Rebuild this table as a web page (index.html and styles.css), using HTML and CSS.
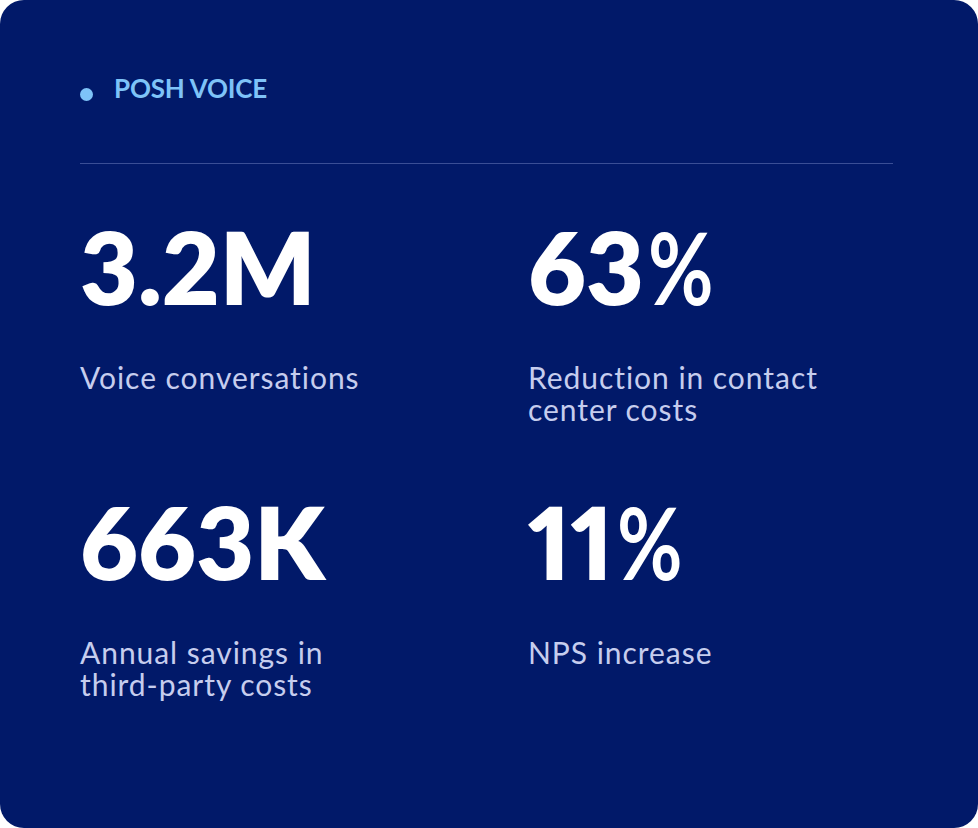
FILE: index.html
```html
<!DOCTYPE html>
<html lang="en">
<head>
<meta charset="utf-8">
<title>Posh Voice</title>
<link rel="stylesheet" href="styles.css">
</head>
<body>
<section class="card">
  <header class="label">
    <span class="dot"></span>
    <span class="label-text">POSH VOICE</span>
  </header>
  <hr class="divider">
  <div class="stats">
    <div class="stat">
      <div class="value">3.2M</div>
      <div class="caption">Voice conversations</div>
    </div>
    <div class="stat">
      <div class="value">63<span class="pct">%</span></div>
      <div class="caption">Reduction in contact<br>center costs</div>
    </div>
    <div class="stat">
      <div class="value">663K</div>
      <div class="caption">Annual savings in<br>third-party costs</div>
    </div>
    <div class="stat">
      <div class="value">11<span class="pct">%</span></div>
      <div class="caption">NPS increase</div>
    </div>
  </div>
</section>
</body>
</html>
```
FILE: styles.css
```css
html, body {
  margin: 0;
  padding: 0;
  background: #ffffff;
}

body {
  font-family: "Lato", "Liberation Sans", sans-serif;
}

.card {
  box-sizing: border-box;
  width: 978px;
  height: 828px;
  background: #011969;
  border-radius: 24px;
  padding: 73px 85px 0 80px;
}

.label {
  display: flex;
  align-items: center;
  gap: 21px;
  height: 31px;
}

.dot {
  width: 13px;
  height: 13px;
  border-radius: 50%;
  background: #7ec3f8;
  margin-top: 11px;
  flex: none;
}

.label-text {
  color: #7ec3f8;
  font-size: 26px;
  font-weight: 700;
  line-height: 31px;
  letter-spacing: -0.2px;
}

.divider {
  border: 0;
  height: 1px;
  background: #3a4e96;
  margin: 59px 0 0 0;
}

.stats {
  display: grid;
  grid-template-columns: 448px 1fr;
  row-gap: 66px;
  margin-top: 52px;
}

.value {
  color: #ffffff;
  font-size: 100px;
  font-weight: 800;
  line-height: 100px;
  font-variant-numeric: proportional-nums;
  font-feature-settings: "pnum" 1;
}

.pct {
  display: inline-block;
  font-weight: 700;
  margin-left: 4px;
  transform: scaleX(0.8);
  transform-origin: left center;
}

.caption {
  margin-top: 45px;
  color: #c6cdee;
  font-size: 30px;
  font-weight: 400;
  line-height: 32px;
  letter-spacing: 0.95px;
}
```
